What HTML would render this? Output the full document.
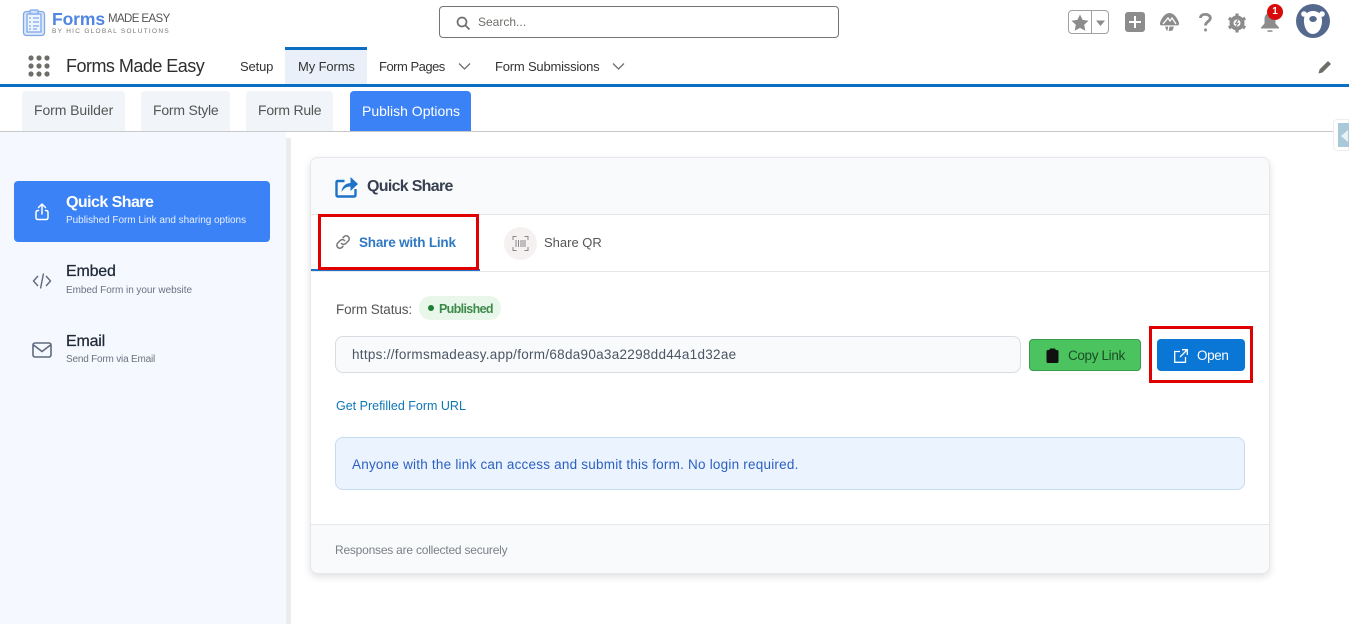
<!DOCTYPE html>
<html><head><meta charset="utf-8">
<style>
*{box-sizing:border-box}
html,body{margin:0;padding:0;width:1352px;height:624px;overflow:hidden;background:#fff;font-family:"Liberation Sans",sans-serif;color:#333}
.a{position:absolute}
.t{position:absolute;white-space:nowrap;line-height:1}
svg{position:absolute;overflow:visible}
</style></head><body>

<!-- logo -->
<svg style="left:22px;top:9px" width="26" height="28" viewBox="0 0 26 28" fill="none" stroke="#7fa8e8" stroke-width="1.3"><rect x="1.5" y="2.5" width="21" height="24" rx="3" fill="#dde9fb"/><rect x="5" y="5" width="14" height="18" fill="#eef4fd"/><rect x="8" y="1" width="8" height="4" rx="1" fill="#cfe0f9"/><path d="M7 9h2M11 9h6M7 13h2M11 13h6M7 17h2M11 17h6M7 20h2M11 20h4"/></svg>
<div class="t" style="left:52px;top:11px;font-size:17.5px;font-weight:bold;color:#4f86e0;letter-spacing:-.1px">Forms</div>
<div class="t" style="left:108px;top:14px;font-size:11.5px;color:#555;letter-spacing:-.6px">MADE EASY</div>
<div class="t" style="left:52px;top:29px;font-size:6.5px;color:#777;letter-spacing:1.28px">BY HIC GLOBAL SOLUTIONS</div>

<!-- search -->
<div class="a" style="left:439px;top:6px;width:400px;height:32px;border:1px solid #747474;border-radius:4px"></div>
<svg style="left:456px;top:16px" width="15" height="15" viewBox="0 0 15 15" fill="none" stroke="#706e6b" stroke-width="1.7"><circle cx="6" cy="6" r="4.5"/><path d="M9.5 9.5L13.5 13.5"/></svg>
<div class="t" style="left:478px;top:16px;font-size:12px;color:#706e6b">Search...</div>

<!-- header right icons -->
<div class="a" style="left:1068px;top:10px;width:41px;height:24px;border:1px solid #a0a0a0;border-radius:4px"></div>
<div class="a" style="left:1091px;top:11px;width:1px;height:22px;background:#a0a0a0"></div>
<svg style="left:1071px;top:14px" width="18" height="17" viewBox="0 0 18 17"><path d="M9 0.5l2.6 5.4 5.9.8-4.3 4.1 1.1 5.9L9 13.9l-5.3 2.8 1.1-5.9L.5 6.7l5.9-.8z" fill="#8c8c8c"/></svg>
<svg style="left:1095px;top:20px" width="11" height="7" viewBox="0 0 11 7"><path d="M1 0.5h9L5.5 6z" fill="#8c8c8c"/></svg>
<div class="a" style="left:1125px;top:12px;width:20px;height:20px;background:#8c8c8c;border-radius:3px"></div>
<svg style="left:1125px;top:12px" width="20" height="20" viewBox="0 0 20 20"><path d="M10 4v12M4 10h12" stroke="#fff" stroke-width="2"/></svg>
<svg style="left:1159px;top:12px" width="21" height="20" viewBox="0 0 21 20"><path d="M10.500 1C6 1 2.500 6 1 11c-.4 1.500.5 2.500 2 3l3 .500 1.500 4 3 .500 3-.500 1.500-4 3-.500c1.500-.500 2.400-1.500 2-3C18.500 6 15 1 10.500 1z" fill="#8c8c8c"/><path d="M4 12l5-6 2 3 2-3 4 6M1 14h19M10 14l-1 5" stroke="#fff" stroke-width="1.300" fill="none"/></svg>
<svg style="left:1199px;top:13px" width="13" height="19" viewBox="0 0 13 19" fill="none" stroke="#8c8c8c" stroke-width="2.800"><path d="M1.500 5C1.500 2.500 3.500 1.400 6.300 1.400s5 1.400 5 3.600c0 3.500-4.800 3.500-4.800 7.500"/><circle cx="6.500" cy="17" r="1.500" fill="#8c8c8c" stroke="none"/></svg>
<svg style="left:1228px;top:13px" width="18" height="20" viewBox="0 0 18 20"><circle cx="9" cy="10" r="5.500" fill="none" stroke="#8c8c8c" stroke-width="4"/><path d="M9 .5v4M9 15.500v4M.8 5.200l3.500 2M13.700 12.800l3.500 2M.8 14.800l3.500-2M13.700 7.200l3.500-2" stroke="#8c8c8c" stroke-width="3.200"/><path d="M10 7L7.800 10.300h2.400L8 13" stroke="#8c8c8c" stroke-width="1.200" fill="none"/></svg>
<svg style="left:1260px;top:12px" width="20" height="21" viewBox="0 0 20 21"><path d="M10 1c-3.500 0-5.500 2.500-5.500 6v4.500L1 15.500v1h18v-1l-3.500-4V7C15.500 3.500 13.500 1 10 1z" fill="#8c8c8c"/><path d="M7.500 18.300h5v1.500h-5z" fill="#8c8c8c"/></svg>
<div class="a" style="left:1267px;top:4px;width:16px;height:16px;background:#d80a0a;border-radius:50%;color:#fff;font-size:10px;font-weight:bold;line-height:16px;text-align:center">1</div>
<svg style="left:1296px;top:4px" width="34" height="34" viewBox="0 0 34 34"><circle cx="17" cy="17" r="17" fill="#54698d"/><circle cx="8" cy="10" r="2.800" fill="#fff"/><circle cx="26" cy="10" r="2.800" fill="#fff"/><path d="M17 7c-6.500 0-9.500 5-9 11 .4 6 3.500 12 9 12s8.600-6 9-12c.5-6-2.500-11-9-11z" fill="#fff"/><ellipse cx="17" cy="15" rx="3.800" ry="3" fill="#54698d"/></svg>

<!-- nav -->
<svg style="left:28px;top:55px" width="22" height="22" viewBox="0 0 22 22" fill="#706e6b"><circle cx="3" cy="3" r="2.600"/><circle cx="11" cy="3" r="2.600"/><circle cx="19" cy="3" r="2.600"/><circle cx="3" cy="11" r="2.600"/><circle cx="11" cy="11" r="2.600"/><circle cx="19" cy="11" r="2.600"/><circle cx="3" cy="19" r="2.600"/><circle cx="11" cy="19" r="2.600"/><circle cx="19" cy="19" r="2.600"/></svg>
<div class="t" style="left:66px;top:57px;font-size:18px;color:#2e2e2e;letter-spacing:-.52px">Forms Made Easy</div>
<div class="t" style="left:240px;top:60px;font-size:13px;color:#333;letter-spacing:-.15px">Setup</div>
<div class="a" style="left:285px;top:47px;width:82px;height:37px;background:#e9f0f9;border-top:3px solid #0a6fc2"></div>
<div class="t" style="left:298px;top:60px;font-size:13px;color:#333;letter-spacing:-.12px">My Forms</div>
<div class="t" style="left:379px;top:60px;font-size:13px;color:#333;letter-spacing:-.5px">Form Pages</div>
<svg style="left:458px;top:62px" width="13" height="9" viewBox="0 0 13 9" fill="none" stroke="#706e6b" stroke-width="1.300"><path d="M1 1.500l5.500 5.500L12 1.500"/></svg>
<div class="t" style="left:495px;top:60px;font-size:13px;color:#333;letter-spacing:-.2px">Form Submissions</div>
<svg style="left:612px;top:62px" width="13" height="9" viewBox="0 0 13 9" fill="none" stroke="#706e6b" stroke-width="1.300"><path d="M1 1.500l5.500 5.500L12 1.500"/></svg>
<svg style="left:1318px;top:60px" width="14" height="14" viewBox="0 0 14 14"><path d="M0.500 13.500l1-4L10 1l3 3-8.500 8.500z" fill="#706e6b"/></svg>
<div class="a" style="left:0;top:84px;width:1349px;height:3px;background:#0a6fc2"></div>

<!-- sub tabs -->
<div class="a" style="left:22px;top:91px;width:103px;height:40px;background:#f1f4f8;border-radius:4px 4px 0 0"></div>
<div class="t" style="left:34px;top:103px;font-size:14px;color:#555;letter-spacing:-.08px">Form Builder</div>
<div class="a" style="left:141px;top:91px;width:89px;height:40px;background:#f1f4f8;border-radius:4px 4px 0 0"></div>
<div class="t" style="left:153px;top:103px;font-size:14px;color:#555;letter-spacing:-.22px">Form Style</div>
<div class="a" style="left:246px;top:91px;width:87px;height:40px;background:#f1f4f8;border-radius:4px 4px 0 0"></div>
<div class="t" style="left:258px;top:103px;font-size:14px;color:#555;letter-spacing:-.22px">Form Rule</div>
<div class="a" style="left:350px;top:91px;width:121px;height:40px;background:#3b82f6;border-radius:4px 4px 0 0"></div>
<div class="t" style="left:362px;top:104px;font-size:14px;color:#fff">Publish Options</div>
<div class="a" style="left:0;top:131px;width:1335px;height:1px;background:#c9c9c9"></div>

<!-- side toggle -->
<div class="a" style="left:1333px;top:119px;width:16px;height:32px;background:#fff;border:1px solid #eee;border-radius:4px 0 0 4px"></div>
<div class="a" style="left:1338px;top:123px;width:11px;height:24px;background:#a9c8da"></div>
<svg style="left:1340px;top:130px" width="9" height="12" viewBox="0 0 9 12"><path d="M8 0v12L1 6z" fill="#e8f1f6"/></svg>

<!-- sidebar -->
<div class="a" style="left:0;top:132px;width:286px;height:492px;background:#f5f8fe"></div>
<div class="a" style="left:286px;top:138px;width:5px;height:486px;background:#ececec"></div>
<div class="a" style="left:14px;top:181px;width:256px;height:61px;background:#3b82f6;border-radius:4px"></div>
<svg style="left:33px;top:202px" width="18" height="20" viewBox="0 0 18 20" fill="none" stroke="#fff" stroke-width="1.500" stroke-linecap="round" stroke-linejoin="round"><path d="M9 12V2M5.500 5.500L9 2l3.500 3.500M5.500 8.500H5q-2 0-2 2v5q0 2 2 2h8q2 0 2-2v-5q0-2-2-2h-.5"/></svg>
<div class="t" style="left:66px;top:195px;font-size:16px;font-weight:bold;color:#fff;letter-spacing:-.55px">Quick Share</div>
<div class="t" style="left:66px;top:216px;font-size:10px;color:#e6efff;letter-spacing:-.03px">Published Form Link and sharing options</div>
<svg style="left:32px;top:272px" width="20" height="18" viewBox="0 0 20 18" fill="none" stroke="#5f6a7d" stroke-width="1.400"><path d="M6 4L1.500 9 6 14M14 4l4.500 5L14 14M11.500 1.500L8.500 16.500"/></svg>
<div class="t" style="left:66px;top:264px;font-size:16px;color:#1f2937;-webkit-text-stroke:.25px #1f2937;letter-spacing:-.2px">Embed</div>
<div class="t" style="left:66px;top:286px;font-size:10px;color:#6b7280;letter-spacing:-.05px">Embed Form in your website</div>
<svg style="left:32px;top:342px" width="20" height="16" viewBox="0 0 20 16" fill="none" stroke="#5f6a7d" stroke-width="1.600"><rect x="1" y="1" width="18" height="14" rx="2"/><path d="M1.500 3L10 9.500 18.500 3"/></svg>
<div class="t" style="left:66px;top:334px;font-size:16px;color:#1f2937;-webkit-text-stroke:.25px #1f2937;letter-spacing:-.2px">Email</div>
<div class="t" style="left:66px;top:355px;font-size:10px;color:#6b7280;letter-spacing:-.2px">Send Form via Email</div>

<!-- card -->
<div class="a" style="left:310px;top:157px;width:960px;height:417px;background:#fff;border:1px solid #e5e7eb;border-radius:8px;box-shadow:0 3px 8px rgba(0,0,0,.12)"></div>
<div class="a" style="left:311px;top:158px;width:958px;height:57px;background:#f9fafb;border-bottom:1px solid #e5e7eb;border-radius:8px 8px 0 0"></div>
<svg style="left:335px;top:174px" width="24" height="24" viewBox="0 0 24 24"><path d="M9.500 7H3q-1.500 0-1.500 1.500V21q0 1.500 1.500 1.500h16q1.500 0 1.500-1.500v-6" fill="none" stroke="#1e73c8" stroke-width="2.400"/><path d="M6.500 18c.5-5.500 4-8.800 9-9V3l7.500 7-7.500 7v-4.500c-4 0-6.500 1.800-9 5.500z" fill="#1e73c8"/></svg>
<div class="t" style="left:367px;top:179px;font-size:16px;font-weight:bold;color:#374151;letter-spacing:-.7px">Quick Share</div>

<!-- tabs -->
<div class="a" style="left:311px;top:271px;width:958px;height:1px;background:#e5e7eb"></div>
<div class="a" style="left:311px;top:269px;width:169px;height:2px;background:#1e73c8"></div>
<svg style="left:335px;top:234px" width="16" height="16" viewBox="0 0 16 16" fill="none" stroke="#777" stroke-width="1.500" stroke-linecap="round"><path d="M6.500 9.500a3 3 0 0 0 4.300 0l2.500-2.500a3 3 0 0 0-4.300-4.300l-1 1"/><path d="M9.500 6.500a3 3 0 0 0-4.300 0L2.700 9a3 3 0 0 0 4.300 4.300l1-1"/></svg>
<div class="t" style="left:359px;top:236px;font-size:13.500px;font-weight:bold;color:#2f78c4;letter-spacing:-.2px">Share with Link</div>
<div class="a" style="left:504px;top:227px;width:33px;height:33px;background:#f4f1f0;border-radius:50%"></div>
<svg style="left:512px;top:235px" width="17" height="17" viewBox="0 0 17 17" fill="none" stroke="#888" stroke-width="1"><path d="M1 5V1.500h3.500M12.500 1.500H16V5M16 12v3.500h-3.500M4.500 15.500H1V12M4 5v7M6.500 5v7M9 5v7M11 5v7M13 5v7"/></svg>
<div class="t" style="left:544px;top:236px;font-size:13px;color:#555">Share QR</div>
<div class="a" style="left:318px;top:214px;width:161px;height:56px;border:3px solid #e00000"></div>

<!-- status -->
<div class="t" style="left:336px;top:303px;font-size:13.500px;color:#555;letter-spacing:-.1px">Form Status:</div>
<div class="a" style="left:419px;top:296px;width:82px;height:24px;background:#e8f7ea;border-radius:12px"></div>
<div class="a" style="left:428px;top:305px;width:6px;height:6px;background:#1e7e34;border-radius:50%"></div>
<div class="t" style="left:439px;top:303px;font-size:12.500px;font-weight:bold;color:#3c8a4a;letter-spacing:-.65px">Published</div>

<!-- link -->
<div class="a" style="left:335px;top:336px;width:686px;height:37px;background:#f9fafb;border:1px solid #d8dde3;border-radius:8px"></div>
<div class="t" style="left:352px;top:348px;font-size:13.500px;color:#4b5563;letter-spacing:.285px">https://formsmadeasy.app/form/68da90a3a2298dd44a1d32ae</div>
<div class="a" style="left:1029px;top:339px;width:112px;height:32px;background:#4bc45f;border:1px solid #3a9a4b;border-radius:4px"></div>
<svg style="left:1046px;top:348px" width="13" height="15" viewBox="0 0 13 15"><rect x="0.500" y="2" width="12" height="13" rx="1.500" fill="#111"/><rect x="3.500" y="0.500" width="6" height="3" rx="1" fill="#111"/></svg>
<div class="t" style="left:1068px;top:349px;font-size:13.500px;color:#1b4d26;letter-spacing:-.35px">Copy Link</div>
<div class="a" style="left:1157px;top:339px;width:88px;height:32px;background:#0a76d6;border-radius:4px"></div>
<svg style="left:1174px;top:349px" width="14" height="14" viewBox="0 0 14 14" fill="none" stroke="#fff" stroke-width="1.300"><path d="M6 2.500H.700v10.800h10.800V8M8 .7h5.300V6M13 1L6 8"/></svg>
<div class="t" style="left:1197px;top:349px;font-size:13.500px;color:#fff;letter-spacing:-.4px">Open</div>
<div class="a" style="left:1149px;top:326px;width:104px;height:57px;border:3px solid #e00000"></div>

<div class="t" style="left:336px;top:400px;font-size:12.500px;color:#0f76b8">Get Prefilled Form URL</div>

<div class="a" style="left:335px;top:437px;width:910px;height:53px;background:#ebf4fe;border:1px solid #c5dcf3;border-radius:8px"></div>
<div class="t" style="left:352px;top:458px;font-size:13.500px;color:#2b5fc0;letter-spacing:.22px">Anyone with the link can access and submit this form. No login required.</div>

<div class="a" style="left:311px;top:524px;width:958px;height:49px;background:#f9fafb;border-top:1px solid #e5e7eb;border-radius:0 0 8px 8px"></div>
<div class="t" style="left:335px;top:544px;font-size:12px;color:#7b8088;letter-spacing:-.22px">Responses are collected securely</div>

</body></html>
